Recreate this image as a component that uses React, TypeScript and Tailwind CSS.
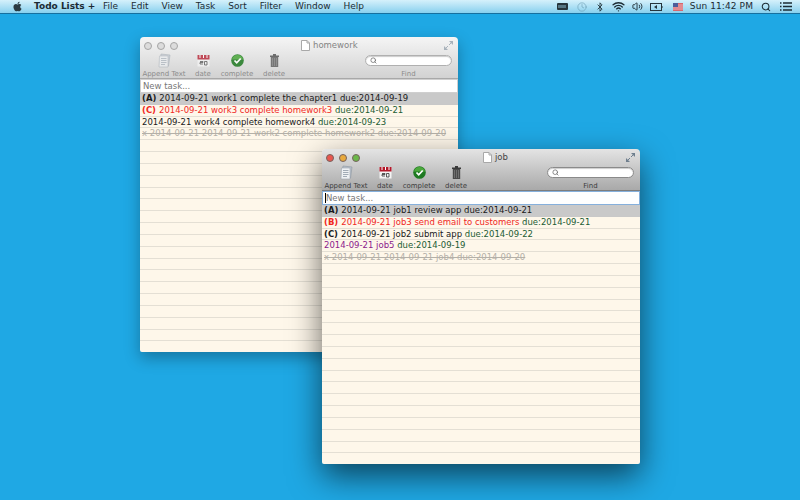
import { Bluetooth, Clock, Search, Volume2, Wifi } from 'lucide-react';
import { FaApple } from 'react-icons/fa';

type Seg = { text: string; className: string };
type Row = { segs: Seg[]; selected?: boolean };

const black = 'text-[#1a1a1a]';
const red = 'text-[#f0281e]';
const green = 'text-[#1c5c34]';
const purple = 'text-[#8c1a8c]';
const done = 'text-[#b4b0a8] line-through';

const homework: Row[] = [
  {
    selected: true,
    segs: [
      { text: '(A) ', className: `${black} font-bold` },
      { text: '2014-09-21 work1 complete the chapter1 due:2014-09-19', className: black },
    ],
  },
  {
    segs: [
      { text: '(C) ', className: `${red} font-bold` },
      { text: '2014-09-21 work3 complete homework3 ', className: red },
      { text: 'due:2014-09-21', className: green },
    ],
  },
  {
    segs: [
      { text: '2014-09-21 work4 complete homework4 ', className: black },
      { text: 'due:2014-09-23', className: green },
    ],
  },
  { segs: [{ text: 'x 2014-09-21 2014-09-21 work2 complete homework2 due:2014-09-20', className: done }] },
];

const job: Row[] = [
  {
    selected: true,
    segs: [
      { text: '(A) ', className: `${black} font-bold` },
      { text: '2014-09-21 job1 review app due:2014-09-21', className: black },
    ],
  },
  {
    segs: [
      { text: '(B) ', className: `${red} font-bold` },
      { text: '2014-09-21 job3 send email to customers ', className: red },
      { text: 'due:2014-09-21', className: green },
    ],
  },
  {
    segs: [
      { text: '(C) ', className: `${black} font-bold` },
      { text: '2014-09-21 job2 submit app ', className: black },
      { text: 'due:2014-09-22', className: green },
    ],
  },
  {
    segs: [
      { text: '2014-09-21 job5 ', className: purple },
      { text: 'due:2014-09-19', className: green },
    ],
  },
  { segs: [{ text: 'x 2014-09-21 2014-09-21 job4 due:2014-09-20', className: done }] },
];

function DocIcon() {
  return (
    <svg width="9" height="11" viewBox="0 0 9 11">
      <path d="M.5.5h5.5l2.5 2.5v7.500h-8z" fill="#fff" stroke="#a8a8a8" />
      <path d="M6 .5v2.500h2.500" fill="none" stroke="#a8a8a8" />
    </svg>
  );
}

function AppendIcon({ active }: { active: boolean }) {
  return (
    <svg width="14" height="15" viewBox="0 0 14 15" className={active ? '' : 'opacity-60'}>
      <path d="M4 1l9 1-1.500 11-9-1z" fill="#b9c2cc" stroke="#8b95a0" strokeWidth=".6" />
      <path d="M2.500 3h8.500v11h-9z" fill="#eef1f4" stroke="#9aa3ad" strokeWidth=".6" />
      <path d="M4 5.500h5.500M4 7.500h5.500M4 9.500h5.500M4 11.500h4" stroke="#8d99a6" strokeWidth=".8" />
    </svg>
  );
}

function DateIcon({ active }: { active: boolean }) {
  return (
    <svg width="13" height="13" viewBox="0 0 13 13" className={active ? '' : 'opacity-75'}>
      <rect x=".5" y="1" width="12" height="11.500" fill="#f4f4f4" />
      <rect x=".5" y="1" width="12" height="4.500" fill="#b3182a" />
      <path d="M3 1v3M6.500 1v3M10 1v3" stroke="#fff" strokeWidth="1" />
      <path d="M3 7.500h3v1h-3v1.500h3M7.500 7.500h2.500v3.500h-2.500z" fill="none" stroke="#333" strokeWidth=".8" />
    </svg>
  );
}

function CompleteIcon({ active }: { active: boolean }) {
  return (
    <svg width="13" height="13" viewBox="0 0 13 13" className={active ? '' : 'opacity-85'}>
      <circle cx="6.500" cy="6.500" r="6.300" fill="#1f7a22" />
      <path d="M1 5.500a5.600 5.600 0 0 1 11 0z" fill="#4ca83c" />
      <path d="M3.500 6.500l2.200 2.300 4-4.300" fill="none" stroke="#fff" strokeWidth="1.800" />
    </svg>
  );
}

function TrashIcon({ active }: { active: boolean }) {
  return (
    <svg width="9" height="13" viewBox="0 0 9 13" className={active ? '' : 'opacity-70'}>
      <rect x="0" y="1.500" width="9" height="1.500" fill="#3a3a3a" />
      <rect x="3" y="0" width="3" height="2" fill="#3a3a3a" />
      <rect x=".8" y="3" width="7.400" height="10" fill="#4a4a4a" />
      <path d="M2.500 4v8M4.500 4v8M6.500 4v8" stroke="#888" strokeWidth=".6" />
    </svg>
  );
}

function ToolItem({ label, width, active, children }: { label: string; width: string; active: boolean; children: React.ReactNode }) {
  return (
    <div className={`flex flex-col items-center ${width}`}>
      <div className="flex h-[17px] items-center justify-center">{children}</div>
      <span className={`mt-[1px] text-[7px] leading-[9px] whitespace-nowrap ${active ? 'text-[#3d3d3d]' : 'text-[#8c8c8c]'}`}>{label}</span>
    </div>
  );
}

function TaskWindow({ title, rows, active, className }: { title: string; rows: Row[]; active: boolean; className: string }) {
  const blank = Array.from({ length: 25 - rows.length });
  return (
    <div className={`absolute flex h-[315px] w-[318px] flex-col overflow-hidden rounded-t-[4px] rounded-b-[2px] ${className}`}>
      <div className={`relative h-[42px] shrink-0 border-b ${active ? 'border-[#7d7d7d] bg-gradient-to-b from-[#e4e4e4] to-[#a9a9a9]' : 'border-[#a8a8a8] bg-gradient-to-b from-[#f5f5f5] to-[#d2d2d2]'}`}>
        <div className="flex h-[15px] items-center px-[4px] pt-[2px]">
          <div className="flex gap-[5px]">
            {(active ? ['bg-[#e8574f]', 'bg-[#e8a93c]', 'bg-[#6cb84a]'] : ['bg-[#dcdcdc]', 'bg-[#dcdcdc]', 'bg-[#dcdcdc]']).map((color, i) => (
              <span key={i} className={`h-[8px] w-[8px] rounded-full border ${active ? 'border-[#77635f]' : 'border-[#a5a5a5]'} ${color}`} />
            ))}
          </div>
          <div className="ml-[123px] flex items-center gap-[3px]">
            <DocIcon />
            <span className={`text-[8.500px] leading-[11px] ${active ? 'text-[#444]' : 'text-[#848484]'}`}>{title}</span>
          </div>
          <svg width="9" height="9" viewBox="0 0 9 9" className="ml-auto mr-[1px]">
            <path d="M5 0h4v4zM0 5v4h4z" fill={active ? '#6f7f8e' : '#a8b2bb'} />
            <path d="M5 4l2-2M4 5l-2 2" stroke={active ? '#6f7f8e' : '#a8b2bb'} />
          </svg>
        </div>
        <div className="flex items-start">
          <ToolItem label="Append Text" width="w-[48px]" active={active}><AppendIcon active={active} /></ToolItem>
          <ToolItem label="date" width="w-[30px]" active={active}><DateIcon active={active} /></ToolItem>
          <ToolItem label="complete" width="w-[38px]" active={active}><CompleteIcon active={active} /></ToolItem>
          <ToolItem label="delete" width="w-[36px]" active={active}><TrashIcon active={active} /></ToolItem>
          <div className="ml-auto mr-[6px] flex w-[87px] flex-col items-center">
            <div className="flex h-[17px] w-full items-center">
              <div className={`flex h-[11px] w-full items-center rounded-full border bg-white pl-[4px] shadow-[inset_0_1px_1px_rgba(0,0,0,.2)] ${active ? 'border-[#8a8a8a]' : 'border-[#b0b0b0]'}`}>
                <Search size={7} strokeWidth={2.5} className="text-[#666]" />
              </div>
            </div>
            <span className={`mt-[1px] text-[7px] leading-[9px] ${active ? 'text-[#3d3d3d]' : 'text-[#8c8c8c]'}`}>Find</span>
          </div>
        </div>
      </div>
      <div className="flex min-h-0 flex-1 flex-col bg-[#fef7ea]">
        <div className={`h-[14px] shrink-0 bg-white px-[2px] text-[8.500px] leading-[13px] text-[#777] ${active ? 'border border-[#86b0dc]' : 'border border-[#cfcfcf]'}`}>
          <span className={active ? 'border-l border-black' : ''}>New task...</span>
        </div>
        {rows.map((row, i) => (
          <div
            key={i}
            className={`h-[11.830px] shrink-0 border-b px-[2px] text-[8.500px] leading-[11.500px] whitespace-nowrap ${row.selected ? 'border-[#c8c8c8] bg-[#c9c9c9]' : 'border-[#e4dfd4]'}`}
          >
            {row.segs.map((seg, j) => (
              <span key={j} className={seg.className}>{seg.text}</span>
            ))}
          </div>
        ))}
        {blank.map((_, i) => (
          <div key={i} className="h-[11.830px] shrink-0 border-b border-[#e4dfd4]" />
        ))}
      </div>
    </div>
  );
}

function MenuBar() {
  const menus = ['File', 'Edit', 'View', 'Task', 'Sort', 'Filter', 'Window', 'Help'];
  return (
    <div className="flex h-[14px] items-center border-b border-[#17709f] bg-gradient-to-b from-[#d5f1fb] to-[#87d0ee] text-[9px] leading-[13px] text-[#1c2b33]">
      <FaApple size={11} className="ml-[12px] text-[#2a3a42]" />
      <span className="ml-[11px] w-[69px] font-bold">Todo Lists +</span>
      <div className="flex gap-[13px]">
        {menus.map((m) => (
          <span key={m}>{m}</span>
        ))}
      </div>
      <div className="ml-auto flex items-center text-[#1c2b33]">
        <svg width="11" height="7" viewBox="0 0 11 7"><rect width="11" height="7" rx="1" fill="#26343b" /><path d="M2 2v3M4 2v3M6 2v3M8 2v3" stroke="#9fd8ef" strokeWidth=".8" /></svg>
        <Clock size={10} strokeWidth={1.5} className="ml-[9px] text-[#6b9db3]" />
        <Bluetooth size={10} strokeWidth={2} className="ml-[8px]" />
        <Wifi size={13} strokeWidth={2.5} className="ml-[7px]" />
        <Volume2 size={11} strokeWidth={2} className="ml-[7px]" />
        <svg width="13" height="8" viewBox="0 0 13 8" className="ml-[7px]"><rect x=".5" y=".5" width="11" height="7" fill="none" stroke="#26343b" /><path d="M12 3v2" stroke="#26343b" /><path d="M7 2v4L4 4z" fill="#26343b" /></svg>
        <svg width="10" height="8" viewBox="0 0 10 8" className="ml-[10px]"><rect width="10" height="8" fill="#d9656c" /><path d="M0 2h10M0 4h10M0 6h10" stroke="#f2d3d6" strokeWidth=".7" /><rect width="5" height="4" fill="#4d5d9a" /></svg>
        <span className="ml-[7px] tracking-[.1px]">Sun 11:42 PM</span>
        <Search size={10} strokeWidth={2.5} className="ml-[8px]" />
        <svg width="12" height="9" viewBox="0 0 12 9" className="ml-[9px] mr-[8px]"><path d="M0 1h1.500M0 4.500h1.500M0 8h1.500M3 1h9M3 4.500h9M3 8h9" stroke="#1c2b33" strokeWidth="1.500" /></svg>
      </div>
    </div>
  );
}

export default function App() {
  return (
    <div className="relative h-[500px] w-[800px] overflow-hidden bg-[#1fa8e4] font-['DejaVu_Sans',sans-serif]">
      <MenuBar />
      <TaskWindow
        title="homework"
        rows={homework}
        active={false}
        className="left-[140px] top-[37px] shadow-[0_6px_16px_rgba(0,0,0,.3)]"
      />
      <TaskWindow
        title="job"
        rows={job}
        active
        className="left-[322px] top-[149px] shadow-[0_12px_32px_rgba(0,0,0,.6)]"
      />
    </div>
  );
}
